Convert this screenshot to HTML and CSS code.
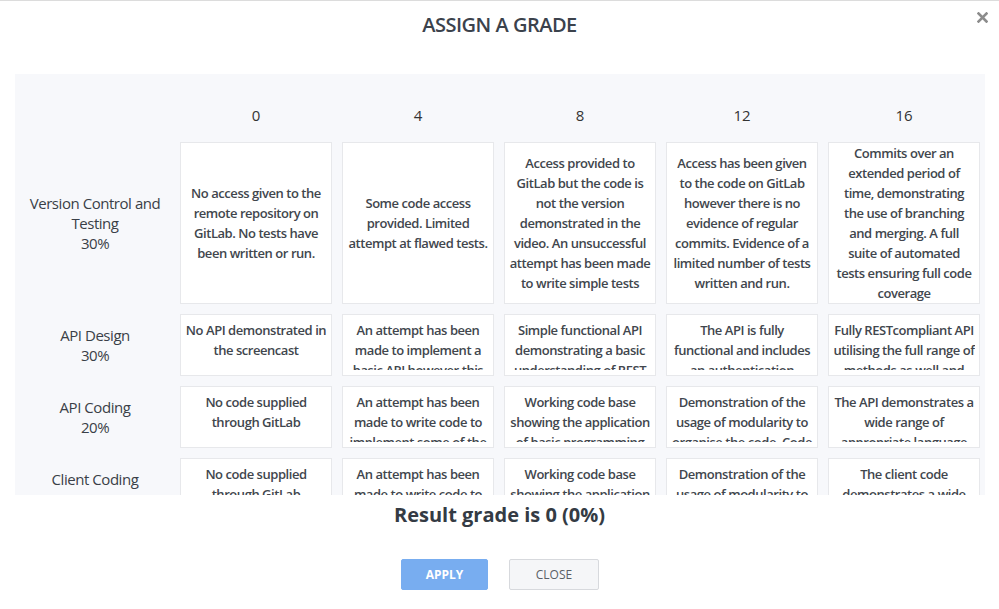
FILE: index.html
```html
<!DOCTYPE html>
<html>
<head>
<meta charset="utf-8">
<link rel="stylesheet" href="styles.css">
</head>
<body>
<div class="modal">
  <header class="modal-head">
    <h2 class="title">ASSIGN A GRADE</h2>
    <button class="x" aria-label="Close">
      <svg width="11" height="11" viewBox="0 0 11 11"><path d="M1.5 1.5 L9.5 9.5 M9.5 1.5 L1.5 9.5" stroke="#8c8c8c" stroke-width="2.6" stroke-linecap="square"/></svg>
    </button>
  </header>
  <div class="scroll">
    <div class="rubric">
      <div class="head-cell"></div>
      <div class="head-cell">0</div>
      <div class="head-cell">4</div>
      <div class="head-cell">8</div>
      <div class="head-cell">12</div>
      <div class="head-cell">16</div>

      <div class="label">Version Control and Testing<br>30%</div>
      <div class="card open"><div class="txt">No access given to the remote repository on GitLab. No tests have been written or run.</div></div>
      <div class="card open"><div class="txt">Some code access provided. Limited attempt at flawed tests.</div></div>
      <div class="card open"><div class="txt">Access provided to GitLab but the code is not the version demonstrated in the video. An unsuccessful attempt has been made to write simple tests</div></div>
      <div class="card open"><div class="txt">Access has been given to the code on GitLab however there is no evidence of regular commits. Evidence of a limited number of tests written and run.</div></div>
      <div class="card open"><div class="txt">Commits over an extended period of time, demonstrating the use of branching and merging. A full<br>suite of automated<br>tests ensuring full code coverage</div></div>

      <div class="label">API Design<br>30%</div>
      <div class="card"><div class="txt">No API demonstrated in the screencast</div></div>
      <div class="card"><div class="txt">An attempt has been made to implement a basic API however this does not follow the REST principles</div></div>
      <div class="card"><div class="txt">Simple functional API demonstrating a basic understanding of REST principles</div></div>
      <div class="card"><div class="txt">The API is fully functional and includes an authentication mechanism</div></div>
      <div class="card"><div class="txt">Fully RESTcompliant API utilising the full range of methods as well and appropriate status codes</div></div>

      <div class="label">API Coding<br>20%</div>
      <div class="card"><div class="txt">No code supplied through GitLab</div></div>
      <div class="card"><div class="txt">An attempt has been made to write code to implement some of the functionality</div></div>
      <div class="card"><div class="txt">Working code base showing the application of basic programming concepts</div></div>
      <div class="card"><div class="txt">Demonstration of the usage of modularity to organise the code. Code is well structured</div></div>
      <div class="card"><div class="txt">The API demonstrates a wide range of appropriate language features</div></div>

      <div class="label">Client Coding<br>20%</div>
      <div class="card"><div class="txt">No code supplied through GitLab</div></div>
      <div class="card"><div class="txt">An attempt has been made to write code to implement some of the functionality</div></div>
      <div class="card"><div class="txt">Working code base showing the application of basic programming concepts</div></div>
      <div class="card"><div class="txt">Demonstration of the usage of modularity to organise the code. Code is well structured</div></div>
      <div class="card"><div class="txt">The client code demonstrates a wide range of appropriate language features</div></div>
    </div>
  </div>
  <div class="result">Result grade is 0 (0%)</div>
  <div class="actions">
    <button class="btn apply">APPLY</button>
    <button class="btn close">CLOSE</button>
  </div>
</div>
</body>
</html>
```

FILE: styles.css
```css
html, body {
  margin: 0;
  padding: 0;
  background: #ffffff;
}
body {
  font-family: "Open Sans", "Liberation Sans", sans-serif;
  color: #333a42;
}
.modal {
  width: 999px;
  height: 609px;
  border-top: 1px solid #dcdcdc;
  box-sizing: border-box;
  position: relative;
}
.modal-head {
  display: flex;
  justify-content: center;
  padding-top: 10px;
  height: 73px;
  box-sizing: border-box;
}
.title {
  margin: 0;
  font-size: 20px;
  line-height: 28px;
  font-weight: 600;
  color: #3b424c;
  letter-spacing: -0.5px;
}
.x {
  position: absolute;
  top: 11px;
  right: 11px;
  border: 0;
  background: transparent;
  padding: 0;
  width: 11px;
  height: 11px;
  display: flex;
}
.scroll {
  margin: 0 14px 0 15px;
  height: 421px;
  overflow: hidden;
  background: #f7f8fb;
}
.rubric {
  display: grid;
  grid-template-columns: 155px repeat(5, 152px);
  column-gap: 10px;
  row-gap: 10px;
  padding-top: 31px;
}
.head-cell {
  text-align: center;
  font-size: 15px;
  line-height: 20px;
  padding-bottom: 7px;
  color: #333;
}
.label {
  padding-left: 5px;
  display: flex;
  align-items: center;
  justify-content: center;
  text-align: center;
  font-size: 15px;
  line-height: 20px;
  letter-spacing: -0.45px;
  color: #3a3f47;
}
.card {
  background: #ffffff;
  border: 1px solid #e7e8eb;
  box-sizing: border-box;
  display: flex;
  justify-content: center;
  align-items: flex-start;
  text-align: center;
  padding: 5px 4px;
  font-size: 13px;
  font-weight: 600;
  line-height: 20px;
  letter-spacing: -0.45px;
  color: #41464d;
}
.card .txt {
  max-height: 50px;
  overflow: hidden;
}
.card.open {
  align-items: center;
  padding: 0 4px;
}
.card.open .txt {
  max-height: none;
}
.result {
  text-align: center;
  font-size: 20px;
  font-weight: 700;
  line-height: 28px;
  padding-top: 6px;
  color: #343b44;
}
.actions {
  display: flex;
  justify-content: center;
  gap: 21px;
  margin-top: 30px;
  padding-left: 1px;
}
.btn {
  height: 31px;
  font-family: "Open Sans", "Liberation Sans", sans-serif;
  font-size: 12px;
  border-radius: 2px;
  box-sizing: border-box;
  padding: 0;
}
.apply {
  width: 87px;
  background: #78adf0;
  color: #ffffff;
  font-weight: 700;
  border: 1px solid #78adf0;
}
.close {
  width: 90px;
  background: #f5f6f8;
  color: #5a5f66;
  border: 1px solid #d7d9dd;
  font-weight: 400;
}
```
